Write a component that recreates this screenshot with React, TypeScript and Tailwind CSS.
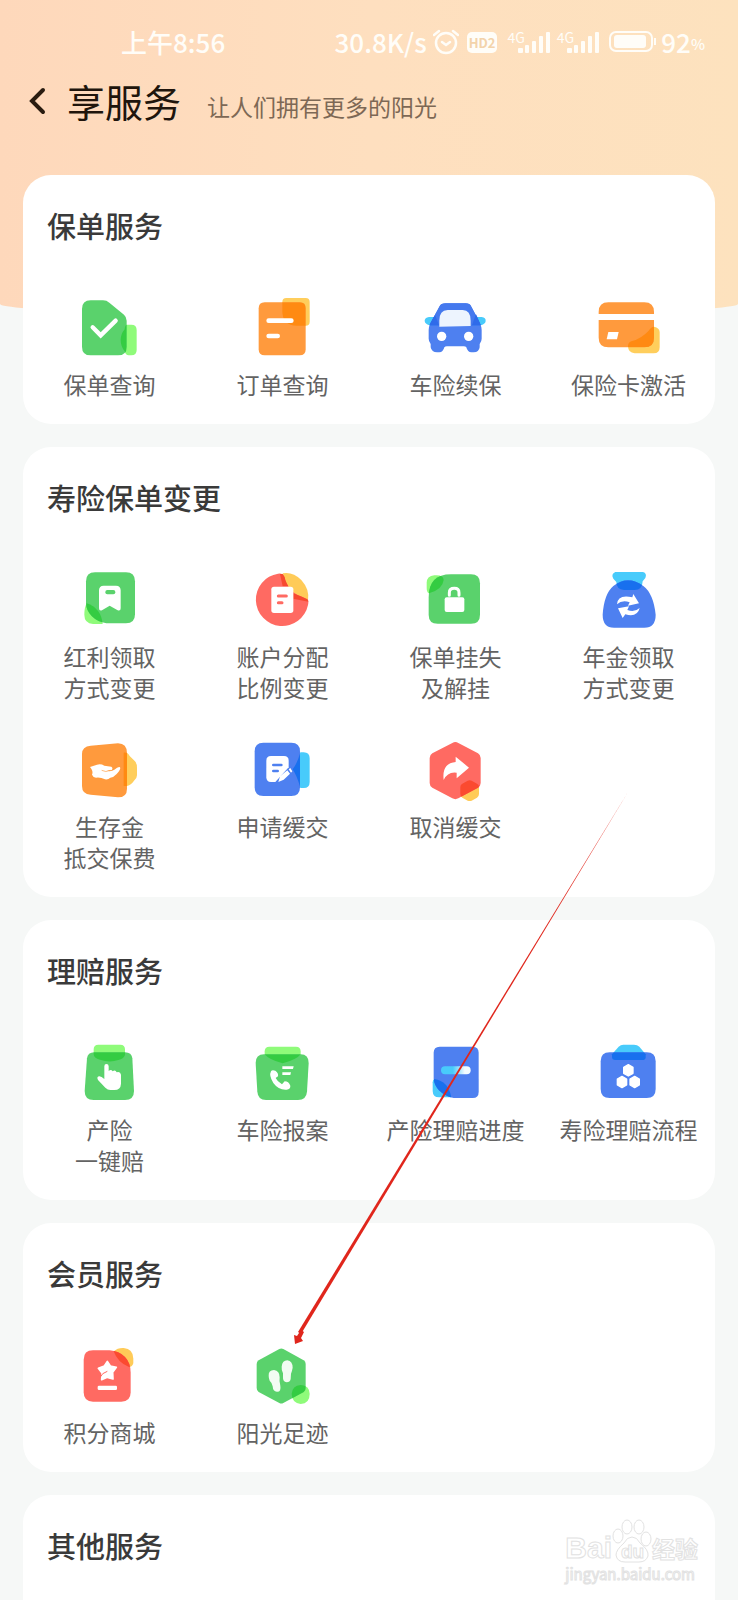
import React, { ReactNode, useId } from 'react';

type Tone = 'green' | 'orange' | 'blue' | 'red';

const tones: Record<Tone, { body: string; accent: string; mix: string }> = {
  green: { body: '#5ad26c', accent: '#8ffb7a', mix: '#34cc42' },
  orange: { body: '#ff9a3d', accent: '#ffce5c', mix: '#ff8a12' },
  blue: { body: '#4e80f0', accent: '#48cbfb', mix: '#1870ee' },
  red: { body: '#ff6a62', accent: '#ffcb58', mix: '#fb4a30' },
};

interface DuoIconProps {
  tone: Tone;
  body: string;
  accent: string;
  children?: ReactNode;
}

// Two overlapping shapes, the shared area gets the darker mix colour
const DuoIcon: React.FC<DuoIconProps> = ({ tone, body, accent, children }) => {
  const clipId = useId();
  const color = tones[tone];
  return (
    <svg viewBox="3 0 180 180" className="size-[60px] overflow-visible" fill="none" aria-hidden="true">
      <clipPath id={clipId}>
        <path d={body} />
      </clipPath>
      <path d={accent} fill={color.accent} />
      <path d={body} fill={color.body} />
      <path d={accent} fill={color.mix} clipPath={`url(#${clipId})`} />
      {children}
    </svg>
  );
};

const PolicyIcon = () => (
  <DuoIcon
    tone="green"
    body="M35 7H72Q83 7 91 14L135 50Q143 57 143 68V146Q143 172 117 172H35Q9 172 9 146V33Q9 7 35 7Z"
    accent="M144 80H157Q173 80 173 96V156Q173 172 157 172H149Q140 172 137 160Q125 145 125 126Q125 108 137 94Q138 80 144 80Z"
  >
    <path d="M41 88L65 112L110 68" stroke="#fff" strokeWidth="13" strokeLinecap="round" />
  </DuoIcon>
);

const OrderIcon = () => (
  <DuoIcon
    tone="orange"
    body="M38 13H143Q161 13 161 31V154Q161 172 143 172H38Q20 172 20 154V31Q20 13 38 13Z"
    accent="M103 0H161Q173 0 173 12V71Q173 83 161 83H135Q91 83 91 39V12Q91 0 103 0Z"
  >
    <path d="M50 68H118M50 114H77" stroke="#fff" strokeWidth="14" strokeLinecap="round" />
  </DuoIcon>
);

const CarIcon = () => (
  <DuoIcon
    tone="blue"
    body="M62 16H122Q134 16 139 26L164 74Q170 86 170 96V122Q170 130 164 138V148Q162 163 146 163H139Q128 163 124 148Q122 145 116 145H66Q60 145 58 148Q54 163 43 163H36Q20 163 17 148V138Q11 130 11 122V96Q11 86 17 74L43 26Q48 16 62 16Z"
    accent="M12 57H170Q183 59 182 69Q181 78 168 82H13Q0 78-1 69Q-1 59 12 57Z"
  >
    <path d="M17 74L30 50H154L165 76L168 82H13Z" fill="#2f6bea" />
    <path d="M30 50L43 26Q48 16 62 16H122Q134 16 139 26L152 50L140 84H43Z" fill="#4579ee" />
    <path d="M43 86V68Q43 36 68 36H113Q137 36 137 68V84Z" fill="#edf4fe" />
    <circle cx="50" cy="115" r="14" fill="#fff" />
    <circle cx="131" cy="115" r="14" fill="#fff" />
  </DuoIcon>
);

const CardIcon = () => (
  <DuoIcon
    tone="orange"
    body="M2 48V42Q2 13 31 13H139Q168 13 168 42V48ZM2 66H168V119Q168 148 139 148H31Q2 148 2 119Z"
    accent="M168 86Q185 90 185 102V148Q185 166 167 166H110Q90 164 90 144Q90 134 100 130Q130 122 152 98Q160 86 168 86Z"
  >
    <path d="M31 102H62L57 124H26Z" fill="#fff" />
  </DuoIcon>
);

const BookmarkIcon = () => (
  <DuoIcon
    tone="green"
    body="M48 7H141Q168 7 168 34V133Q168 160 141 160H82Q56 156 38 138Q22 122 21 100V34Q21 7 48 7Z"
    accent="M23 100Q66 114 71 162H42Q16 160 16 134Q16 112 23 100Z"
  >
    <path d="M74 47H111Q125 47 125 61V115Q125 124 116 121L92 107L69 121Q60 124 60 115V61Q60 47 74 47Z" fill="#fff" />
    <rect x="79" y="60" width="30" height="13" rx="6" fill="#5ad26c" />
  </DuoIcon>
);

const AccountIcon = () => (
  <svg viewBox="3 0 180 180" className="size-[60px] overflow-visible" fill="none" aria-hidden="true">
    <path d="M92 10Q122 4 148 30Q173 58 168 90L110 72Z" fill="#ffcb58" />
    <path d="M78 11Q94 9 97 22Q106 60 138 76Q156 82 166 88Q171 93 168 105A79 79 0 1 1 78 11Z" fill="#ff6a62" />
    <path d="M92 12Q98 18 100 30Q104 40 109 49H92L84 12ZM124 70Q150 80 166 88Q169 91 169 95L124 86Z" fill="#f7492f" />
    <rect x="58" y="50" width="66" height="79" rx="8" fill="#fff" />
    <path d="M79 78H103M79 98H90" stroke="#ff6a62" strokeWidth="9" strokeLinecap="round" />
  </svg>
);

const LockIcon = () => (
  <DuoIcon
    tone="green"
    body="M78 13H138Q165 13 165 40V134Q165 161 138 161H38Q11 161 11 134V82Q11 13 78 13Z"
    accent="M28 16H34Q56 16 56 30Q53 58 12 70Q5 69 5 52V39Q5 18 28 16Z"
  >
    <rect x="59" y="82" width="59" height="44" rx="6" fill="#fff" />
    <path d="M73 76V68Q73 55 88 55Q102 55 102 68V76" stroke="#fff" strokeWidth="9" strokeLinecap="round" />
  </DuoIcon>
);

const BagIcon = () => (
  <DuoIcon
    tone="blue"
    body="M46 48Q90 14 136 48Q166 70 173 134Q173 173 139 173H48Q14 173 14 134Q18 72 46 48Z"
    accent="M52 6H135Q148 10 142 24L134 34Q133 60 110 60H78Q55 58 55 36L46 26Q38 12 52 6Z"
  >
    <path d="M57 103Q59 72 103 82L106 72L123 100L90 107L95 97Q72 89 57 103Z" fill="#fff" />
    <path d="M125 114Q118 143 82 133L74 144L60 115L93 109L88 120Q110 128 125 114Z" fill="#fff" />
  </DuoIcon>
);

const HandIcon = () => (
  <DuoIcon
    tone="orange"
    body="M35 17L117 10Q144 10 144 40V146Q144 172 117 172L35 164Q9 163 9 138V42Q9 19 35 17Z"
    accent="M134 38Q146 36 152 48L168 64Q174 70 174 84V106Q174 116 165 122Q158 134 144 138H134Z"
  >
    <path
      d="M33 81L54 74Q66 71 76 77L97 80Q103 84 98 90L84 92Q96 96 106 89Q118 79 123 82Q127 87 113 102Q104 112 94 113Q87 120 78 118Q64 111 51 113Q42 112 39 104Q44 94 33 81Z"
      fill="#fff"
    />
    <path d="M68 91Q80 98 94 91" stroke="#ff9a3d" strokeWidth="2" />
  </DuoIcon>
);

const ApplyIcon = () => (
  <DuoIcon
    tone="blue"
    body="M34 8H118Q144 8 144 34V142Q144 168 118 168H34Q8 168 8 142V34Q8 8 34 8Z"
    accent="M145 37H155Q173 37 173 55V126Q173 144 155 144H145Q136 110 122 88Q136 70 145 37Z"
  >
    <path d="M57 48H96Q110 48 110 62V82L70 126H57Q43 126 43 112V62Q43 48 57 48Z" fill="#fff" />
    <path d="M64 75H88M64 93H77" stroke="#4e80f0" strokeWidth="8" strokeLinecap="round" />
    <path d="M79 126L84 109L106 91L114 101L95 119ZM110 88L115 84Q118 89 121 94L117 98Z" fill="#fff" />
  </DuoIcon>
);

const CancelIcon = () => (
  <DuoIcon
    tone="red"
    body="M82 9Q91 3 100 9L159 40Q167 45 167 54V129Q167 138 159 143L100 175Q91 180 82 175L22 143Q14 138 14 129V54Q14 45 22 40Z"
    accent="M128 122Q134 119 140 122L156 131Q162 134 162 141V162Q162 169 156 173L140 182Q134 184 128 182L112 173Q106 169 106 162V141Q106 134 112 131Z"
  >
    <path d="M92 50L132 83L95 115V98Q68 94 56 120Q50 69 92 66Z" fill="#fff" />
  </DuoIcon>
);

const OneTapIcon = () => (
  <DuoIcon
    tone="green"
    body="M46 28H138Q158 28 160 46L165 144Q165 171 138 171H44Q17 171 17 144L24 46Q26 28 46 28Z"
    accent="M58 5H124Q138 5 138 19V36Q134 48 118 51Q92 60 63 50Q44 46 44 34V19Q44 5 58 5Z"
  >
    <path
      d="M76 70Q76 63 82 63Q89 63 89 70V84Q96 77 101 85Q109 79 113 88Q124 84 126 95V122Q125 141 106 141H94Q86 141 79 134L57 111Q52 102 60 100Q66 99 76 108Z"
      fill="#fff"
    />
  </DuoIcon>
);

const CallIcon = () => (
  <DuoIcon
    tone="green"
    body="M36 34H146Q170 34 170 60L165 146Q163 171 138 171H42Q18 171 16 146L11 60Q11 34 36 34Z"
    accent="M52 11H132Q146 11 146 25V34Q134 50 92 61Q52 51 38 34V25Q38 11 52 11Z"
  >
    <path
      d="M57 85Q60 79 70 83Q80 90 78 100L71 105Q76 116 90 124L98 115Q110 115 115 128Q116 138 104 140Q80 142 64 120Q50 98 57 85Z"
      fill="#fff"
    />
    <path d="M91 70H125L123 78H91ZM91 88H117L115 96H91Z" fill="#fff" />
  </DuoIcon>
);

const ProgressIcon = () => (
  <DuoIcon
    tone="blue"
    body="M44 11H143Q161 11 161 29V147Q161 165 143 165H86Q60 161 42 142Q27 126 26 106V29Q26 11 44 11Z"
    accent="M28 108Q70 114 79 163H42Q23 162 23 143V118Q23 110 28 108Z"
  >
    <linearGradient id="progress-bar" x1="0" x2="1">
      <stop offset="0.4" stopColor="#48cbfb" />
      <stop offset="0.8" stopColor="#f2fbff" />
    </linearGradient>
    <rect x="48" y="70" width="89" height="24" rx="12" fill="url(#progress-bar)" />
  </DuoIcon>
);

const hexagon = (cx: number, cy: number) =>
  `M${cx} ${cy - 17}L${cx + 14} ${cy - 9}V${cy + 9}L${cx} ${cy + 17}L${cx - 14} ${cy + 9}V${cy - 9}Z`;

const FlowIcon = () => (
  <DuoIcon
    tone="blue"
    body="M35 28H146Q173 28 173 55V138Q173 165 146 165H35Q8 165 8 138V55Q8 28 35 28Z"
    accent="M62 11Q68 5 76 5H108Q118 5 124 11L143 34V44Q142 51 132 51H52Q42 51 42 42V34Z"
  >
    <path
      d={hexagon(91, 82) + hexagon(72, 117) + hexagon(110, 117)}
      fill="#fff"
      stroke="#fff"
      strokeWidth="4"
      strokeLinejoin="round"
    />
  </DuoIcon>
);

const MallIcon = () => (
  <DuoIcon
    tone="red"
    body="M42 13H92Q120 15 138 33Q155 51 155 80V139Q155 167 127 167H42Q14 167 14 139V41Q14 13 42 13Z"
    accent="M134 6Q163 9 163 38V52Q160 63 150 63Q116 50 104 16Q116 5 134 6Z"
  >
    <path
      d="M85 46L94 60L112 64L101 79L102 99L85 94L68 101L69 81L58 67L76 60Z"
      fill="#fff"
      stroke="#fff"
      strokeWidth="5"
      strokeLinejoin="round"
    />
    <path d="M62 96Q69 80 85 76" stroke="#ff6a62" strokeWidth="3" />
    <rect x="56" y="119" width="58" height="13" rx="4" fill="#fff" />
  </DuoIcon>
);

const FootprintIcon = () => (
  <DuoIcon
    tone="green"
    body="M82 9Q88 6 94 9L155 43Q161 47 161 54V126Q161 134 155 138L94 171Q88 174 82 171L20 138Q14 134 14 126V54Q14 47 20 43Z"
    accent="M146 117Q173 119 173 144Q173 173 146 174Q120 171 119 144Q121 118 146 117Z"
  >
    <path d="M50 89Q49 73 66 72Q83 74 83 94Q81 107 85 119Q88 137 76 137Q63 138 62 121Q61 111 53 104Q50 97 50 89Z" fill="#f2fcf3" />
    <path d="M89 62Q91 43 106 43Q122 46 122 65Q120 76 117 83L116 99Q114 109 104 109Q92 108 93 94V82Q88 71 89 62Z" fill="#f2fcf3" />
  </DuoIcon>
);

interface Service {
  label: string[];
  icon: React.FC;
}

const sections: { title: string; items: Service[] }[] = [
  {
    title: '保单服务',
    items: [
      { label: ['保单查询'], icon: PolicyIcon },
      { label: ['订单查询'], icon: OrderIcon },
      { label: ['车险续保'], icon: CarIcon },
      { label: ['保险卡激活'], icon: CardIcon },
    ],
  },
  {
    title: '寿险保单变更',
    items: [
      { label: ['红利领取', '方式变更'], icon: BookmarkIcon },
      { label: ['账户分配', '比例变更'], icon: AccountIcon },
      { label: ['保单挂失', '及解挂'], icon: LockIcon },
      { label: ['年金领取', '方式变更'], icon: BagIcon },
      { label: ['生存金', '抵交保费'], icon: HandIcon },
      { label: ['申请缓交'], icon: ApplyIcon },
      { label: ['取消缓交'], icon: CancelIcon },
    ],
  },
  {
    title: '理赔服务',
    items: [
      { label: ['产险', '一键赔'], icon: OneTapIcon },
      { label: ['车险报案'], icon: CallIcon },
      { label: ['产险理赔进度'], icon: ProgressIcon },
      { label: ['寿险理赔流程'], icon: FlowIcon },
    ],
  },
  {
    title: '会员服务',
    items: [
      { label: ['积分商城'], icon: MallIcon },
      { label: ['阳光足迹'], icon: FootprintIcon },
    ],
  },
];

const Signal = () => (
  <div className="flex items-start">
    <span className="text-[14px] leading-[12px] font-normal">4G</span>
    <svg viewBox="0 0 33 22" className="-ml-[7px] h-[22px] w-[33px]" fill="currentColor" aria-hidden="true">
      <rect x="0" y="17" width="5" height="5" rx="1" />
      <rect x="7" y="14" width="4" height="8" rx="1" />
      <rect x="14" y="10" width="4" height="12" rx="1" />
      <rect x="21" y="5" width="4" height="17" rx="1" />
      <rect x="28" y="1" width="4" height="21" rx="1" />
    </svg>
  </div>
);

const StatusBar = () => (
  <div className="flex h-[30px] items-center justify-between pl-[121px] pr-[33px] text-[26px] leading-[30px] font-medium text-[#fffdf8]">
    <span>上午8:56</span>
    <div className="flex items-center">
      <span>30.8K/s</span>
      <svg viewBox="0 0 26 26" className="ml-[6px] size-[26px]" fill="none" stroke="currentColor" strokeWidth="2.5" strokeLinecap="round" aria-hidden="true">
        <circle cx="13" cy="14" r="10" />
        <path d="M9 13L13 16L17 13M1 6L6 2M20 2L25 6" />
      </svg>
      <span className="ml-2 rounded-[5px] bg-[#fffdf8] px-[2px] text-[13px] leading-[21px] font-bold text-[#f3d3ab]">HD2</span>
      <div className="ml-[10px] flex gap-[6px]">
        <Signal />
        <Signal />
      </div>
      <svg viewBox="0 0 48 22" className="ml-[9px] h-[22px] w-[48px]" aria-hidden="true">
        <rect x="1" y="1" width="42" height="19" rx="6" fill="none" stroke="currentColor" strokeWidth="2" />
        <rect x="5" y="4" width="32" height="13" rx="3" fill="currentColor" />
        <path d="M46 7V14" stroke="currentColor" strokeWidth="2" />
      </svg>
      <span className="ml-1">92</span>
      <span className="self-end text-[15px] leading-[26px]">%</span>
    </div>
  </div>
);

const ServiceCard: React.FC<{ title: string; items: Service[] }> = ({ title, items }) => (
  <section className="rounded-[28px] bg-white pt-[30px] pb-6">
    <h2 className="px-6 text-[29px] leading-[40px] font-medium text-[#3a3a3a]">{title}</h2>
    <div className="mt-[53px] grid grid-cols-4 gap-y-[37px]">
      {items.map(({ label, icon: Icon }) => (
        <button key={label.join('')} type="button" className="flex flex-col items-center justify-start">
          <Icon />
          <span className="mt-[11px] text-[23px] leading-[31px] whitespace-nowrap text-[#636363]">
            {label.map(line => (
              <span key={line} className="block">{line}</span>
            ))}
          </span>
        </button>
      ))}
    </div>
  </section>
);

const Pointer = () => (
  <svg viewBox="0 0 336 554" className="pointer-events-none absolute top-[791px] left-[293px] h-[554px] w-[336px]" aria-hidden="true">
    <path d="M335 1L8 543L5 541Z" fill="#e0261c" />
    <path d="M2 553L1 544L4 545L8 539L11 541L8 547L10 550Z" fill="#e0261c" />
  </svg>
);

const Watermark = () => (
  <div className="absolute right-[40px] bottom-[15px] font-bold text-white [-webkit-text-stroke:1px_#e2e2e2]">
    <div className="flex items-end">
      <span className="font-['Liberation_Sans',sans-serif] text-[30px] leading-[30px]">Bai</span>
      <svg viewBox="0 0 40 44" className="h-[44px] w-[40px]" fill="#fff" stroke="#e2e2e2" aria-hidden="true">
        <ellipse cx="6" cy="17" rx="5" ry="7" />
        <ellipse cx="15" cy="8" rx="5" ry="7" />
        <ellipse cx="27" cy="8" rx="5" ry="7" />
        <ellipse cx="34" cy="20" rx="5" ry="7" />
        <path d="M20 18Q25 18 28 24Q37 31 36 37Q34 43 27 43H13Q5 43 4 36Q4 31 12 24Q15 18 20 18Z" />
        <text x="9" y="39" fontSize="19" className="font-['Liberation_Sans',sans-serif]">du</text>
      </svg>
      <span className="text-[23px] leading-[30px]">经验</span>
    </div>
    <div className="text-[15px] leading-[22px] font-normal">jingyan.baidu.com</div>
  </div>
);

const App: React.FC = () => {
  return (
    <div className="relative flex min-h-screen flex-col overflow-hidden bg-[#f6f8f7] font-['Noto_Sans_CJK_SC',sans-serif]">
      <header className="rounded-b-[50%_12px] bg-linear-to-r from-[#fed8bb] via-[#fedfbf] to-[#fde2be] pt-[27px] pb-[187px]">
        <StatusBar />
        <div className="mt-4 flex h-[56px] items-center pl-[29px]">
          <button type="button" aria-label="返回">
            <svg viewBox="0 0 18 28" className="h-[28px] w-[18px]" fill="none" stroke="#2a1c10" strokeWidth="4" strokeLinecap="round" aria-hidden="true">
              <path d="M14 3L3 14L14 25" />
            </svg>
          </button>
          <h1 className="ml-5 text-[38px] leading-[56px] text-[#20150c]">享服务</h1>
          <p className="mt-[11px] ml-[26px] text-[23px] leading-[31px] text-[#7d6855]">让人们拥有更多的阳光</p>
        </div>
      </header>

      <main className="-mt-[141px] flex flex-1 flex-col gap-[23px] px-[23px]">
        {sections.map(section => (
          <ServiceCard key={section.title} title={section.title} items={section.items} />
        ))}
        <section className="flex-1 rounded-t-[28px] bg-white pt-[30px] pb-8">
          <h2 className="px-6 text-[29px] leading-[40px] font-medium text-[#3a3a3a]">其他服务</h2>
        </section>
      </main>

      <Pointer />
      <Watermark />
    </div>
  );
};

export default App;
